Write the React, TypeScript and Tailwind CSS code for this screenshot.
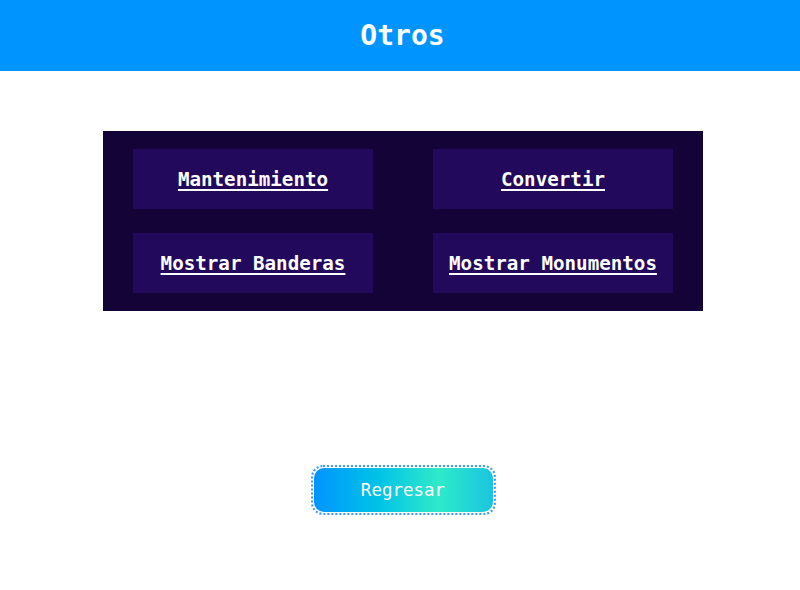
import React from 'react';

const links = ['Mantenimiento', 'Convertir', 'Mostrar Banderas', 'Mostrar Monumentos'];

const App: React.FC = () => {
  return (
    <main className="min-h-screen w-full bg-white font-['DejaVu_Sans_Mono',monospace]">
      {/* Header */}
      <header className="h-[71px] bg-[#0094ff] flex items-center justify-center pl-[5px]">
        <h1 className="text-[28px] font-bold text-white">Otros</h1>
      </header>

      <div className="pl-[6px]">
        {/* Menu panel */}
        <section className="mx-auto mt-[60px] w-[600px] bg-[#130336] px-[30px] py-[18px] grid grid-cols-2 gap-x-[60px] gap-y-[24px]">
          {links.map((label) => (
            <a
              key={label}
              href="#"
              className="h-[60px] pt-[3px] bg-[#22095b] flex items-center justify-center text-[19.2px] font-bold text-white underline underline-offset-[3px] decoration-2"
            >
              {label}
            </a>
          ))}
        </section>

        {/* Back button */}
        <div className="flex justify-center mt-[154px]">
          <button className="w-[185px] h-[50px] rounded-[12px] border-2 border-dotted border-[#3d9cf5] p-px">
            <span className="w-full h-full rounded-[10px] flex items-center justify-center bg-gradient-to-r from-[#0094ff] via-[#2eeac8] via-70% to-[#1cc4e0] text-[17.5px] text-white">
              Regresar
            </span>
          </button>
        </div>
      </div>
    </main>
  );
};

export default App;
